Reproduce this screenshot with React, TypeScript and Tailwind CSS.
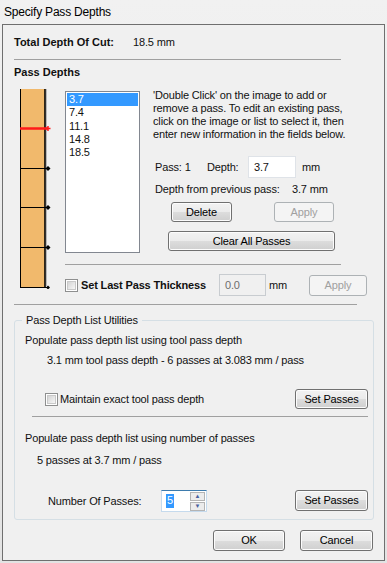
import React from 'react';

const btn =
  'flex shrink-0 items-center justify-center rounded-[3px] border border-[#707070] bg-[linear-gradient(#f2f2f2,#ebebeb_50%,#dddddd_50%,#cfcfcf)] text-black shadow-[inset_0_0_0_1px_#fcfcfc]';
const btnOff =
  'flex shrink-0 items-center justify-center rounded-[3px] border border-[#adb2b5] bg-[#f4f4f4] text-[#a0a0a0]';

const Check: React.FC = () => (
  <span className="flex h-[13px] w-[13px] shrink-0 items-center justify-center border border-[#8e8f8f] bg-white">
    <span className="h-[9px] w-[9px] border border-[#c9c9c9] bg-linear-to-br from-[#d4d4d4] to-[#f7f7f7]" />
  </span>
);

const Ruler: React.FC = () => {
  const marks = [79, 118, 158];
  return (
    <svg width="40" height="200" viewBox="0 0 40 200" className="shrink-0">
      <rect x="6" y="0" width="25" height="199" fill="#f1b96c" />
      <line x1="6.5" y1="0" x2="6.5" y2="199" stroke="#000" strokeWidth="1" />
      <line x1="31" y1="0" x2="31" y2="199" stroke="#000" strokeWidth="1.6" />
      <line x1="32.5" y1="0" x2="32.5" y2="197" stroke="#b8b8b8" strokeWidth="1" />
      <line x1="6" y1="39.5" x2="34" y2="39.5" stroke="#ff1a1a" strokeWidth="2.5" />
      <path d="M31.5 39.5h5M34 37v5" stroke="#ff1a1a" strokeWidth="1.5" />
      {marks.map((y) => (
        <g key={y}>
          <line x1="6" y1={y + 0.5} x2="34" y2={y + 0.5} stroke="#000" strokeWidth="1" />
          <path d={`M34 ${y - 2} l2.5 2.5 l-2.5 2.5 l-2.5 -2.5z`} fill="#000" />
        </g>
      ))}
      <line x1="6" y1="198.5" x2="34" y2="198.5" stroke="#000" strokeWidth="1" />
      <path d="M34 196.5 l2 2 l-2 2 l-2 -2z" fill="#000" />
    </svg>
  );
};

const App: React.FC = () => {
  const depths = ['3.7', '7.4', '11.1', '14.8', '18.5'];

  return (
    <div className="h-[563px] w-[387px] overflow-hidden bg-linear-to-b from-[#f1f1f1] to-[#e3e3e3] font-['Liberation_Sans',sans-serif] text-[11px] leading-[13px] tracking-[-0.15px] text-[#111]">
      {/* title bar */}
      <div className="flex h-[24px] items-center pl-[4px] text-[12px] tracking-[-0.2px] text-black">Specify Pass Depths</div>

      <div className="mx-[2px] flex h-[537px] flex-col overflow-hidden border border-[#6f6f6f] bg-[#f0f0f0] pl-[11px]">
        <div className="mt-[11px] flex h-[13px] shrink-0 items-center whitespace-nowrap">
          <span className="w-[119px] shrink-0 font-bold tracking-normal">Total Depth Of Cut:</span>
          <span>18.5 mm</span>
        </div>
        <div className="mt-[10px] h-px w-[327px] shrink-0 bg-[#a0a0a0]" />
        <div className="mt-[6px] h-[13px] shrink-0 font-bold tracking-normal">Pass Depths</div>

        <div className="mt-[10px] flex shrink-0">
          <Ruler />
          <div className="ml-[11px] flex w-[276px] shrink-0 flex-col">
            <div className="flex">
              <div className="mt-[2px] h-[162px] w-[75px] shrink-0 border border-[#828790] bg-white p-px">
                {depths.map((d, i) => (
                  <div
                    key={d}
                    className={`h-[13.3px] pl-[2px] leading-[13.3px] ${i === 0 ? 'bg-[#3399ff] text-white' : ''}`}
                  >
                    {d}
                  </div>
                ))}
              </div>
              <div className="ml-[13px] flex flex-1 flex-col whitespace-nowrap">
                <p>
                  'Double Click' on the image to add or
                  <br />
                  remove a pass. To edit an existing pass,
                  <br />
                  click on the image or list to select it, then
                  <br />
                  enter new information in the fields below.
                </p>
                <div className="mt-[15px] flex h-[22px] items-center pl-[2px]">
                  <span className="w-[52px] shrink-0">Pass: 1</span>
                  <span className="w-[41px] shrink-0">Depth:</span>
                  <span className="flex h-[22px] w-[48px] shrink-0 items-center border border-[#dfe3e8] bg-white pl-[5px]">3.7</span>
                  <span className="ml-[6px]">mm</span>
                </div>
                <div className="mt-[5px] flex h-[13px] pl-[2px]">
                  <span className="w-[137px] shrink-0">Depth from previous pass:</span>
                  <span>3.7 mm</span>
                </div>
                <div className="mt-[6px] flex h-[20px]">
                  <div className={`${btn} ml-[18px] w-[61px]`}>Delete</div>
                  <div className={`${btnOff} ml-[42px] w-[60px]`}>Apply</div>
                </div>
                <div className={`${btn} mt-[9px] ml-[15px] h-[20px] w-[167px]`}>Clear All Passes</div>
              </div>
            </div>
            <div className="mt-[11px] h-px w-[276px] bg-[#a0a0a0]" />
            <div className="mt-[9px] flex h-[22px] items-center whitespace-nowrap">
              <Check />
              <span className="ml-[3px] w-[138px] shrink-0 font-bold">Set Last Pass Thickness</span>
              <span className="flex h-[22px] w-[47px] shrink-0 items-center border border-[#c8ccd0] pl-[5px] text-[#6d6d6d]">0.0</span>
              <span className="ml-[3px] w-[17px] shrink-0">mm</span>
              <div className={`${btnOff} ml-[23px] h-[21px] w-[58px]`}>Apply</div>
            </div>
          </div>
        </div>

        <div className="mt-[8px] h-px w-[343px] shrink-0 bg-[#a0a0a0]" />

        {/* group box */}
        <div className="relative mt-[15px] flex h-[200px] w-[360px] shrink-0 flex-col whitespace-nowrap rounded-[3px] border border-[#d5dfe5] pl-[10px]">
          <span className="absolute -top-[7px] left-[7px] bg-[#f0f0f0] px-[4px]">Pass Depth List Utilities</span>
          <div className="mt-[13px] h-[13px]">Populate pass depth list using tool pass depth</div>
          <div className="mt-[7px] ml-[22px] h-[13px]">3.1 mm tool pass depth - 6 passes at 3.083 mm / pass</div>
          <div className="mt-[22px] flex h-[20px] items-center">
            <span className="ml-[20px]">
              <Check />
            </span>
            <span className="ml-[2px]">Maintain exact tool pass depth</span>
            <div className={`${btn} ml-auto mr-[5px] h-[20px] w-[73px]`}>Set Passes</div>
          </div>
          <div className="mt-[7px] ml-[7px] h-px w-[336px] bg-[#a0a0a0]" />
          <div className="mt-[15px] h-[13px]">Populate pass depth list using number of passes</div>
          <div className="mt-[9px] ml-[12px] h-[13px]">5 passes at 3.7 mm / pass</div>
          <div className="mt-[23px] flex h-[22px] items-start">
            <span className="ml-[23px] mt-[5px] w-[113px] shrink-0">Number Of Passes:</span>
            <div className="flex h-[22px] w-[46px] shrink-0 border border-[#c5daed] border-t-[#3d7bad] bg-white">
              <span className="ml-[4px] mt-[3px] h-[14px] bg-[#3399ff] px-px text-white">5</span>
              <div className="ml-auto mr-px flex flex-col justify-center gap-px">
                <span className="flex h-[9px] w-[15px] items-center justify-center border border-[#b4b4b4] bg-[#ececec] text-[6px] leading-none text-[#4a5f9e]">▲</span>
                <span className="flex h-[9px] w-[15px] items-center justify-center border border-[#b4b4b4] bg-[#ececec] text-[6px] leading-none text-[#4a5f9e]">▼</span>
              </div>
            </div>
            <div className={`${btn} ml-auto mr-[5px] h-[21px] w-[73px]`}>Set Passes</div>
          </div>
        </div>

        <div className="mt-[10px] flex h-[21px] shrink-0">
          <div className={`${btn} ml-[199px] h-[21px] w-[72px] border-[#3c7fb1] shadow-[inset_0_0_0_1px_#a9e3f9]`}>OK</div>
          <div className={`${btn} ml-[15px] h-[21px] w-[73px]`}>Cancel</div>
        </div>
      </div>
    </div>
  );
};

export default App;
